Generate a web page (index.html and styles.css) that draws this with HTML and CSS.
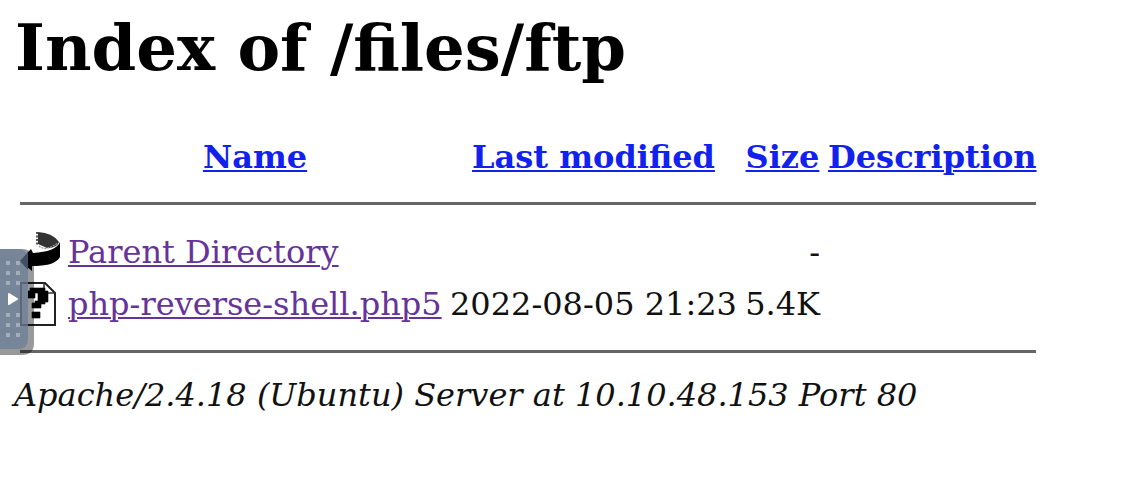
FILE: index.html
```html
<!DOCTYPE html>
<html lang="en">
<head>
<meta charset="utf-8">
<title>Index of /files/ftp</title>
<link rel="stylesheet" href="styles.css">
</head>
<body>
<h1 class="title">Index of /files/ftp</h1>
<table class="listing">
  <colgroup><col class="c-icon"><col class="c-name"><col class="c-date"><col class="c-size"><col class="c-desc"></colgroup>
  <tr class="head"><th></th><th><a href="#">Name</a></th><th><a href="#">Last modified</a></th><th><a href="#">Size</a></th><th><a href="#">Description</a></th></tr>
  <tr class="rule"><th colspan="5"><hr></th></tr>
  <tr class="item">
    <td><svg class="icon" viewBox="0 0 40 44" width="40" height="44">
      <path d="M18 2Q33 3 39 12Q37 18 27 18L18 14Z" fill="#333"/>
      <path d="M17 2V16" stroke="#555" stroke-width="2" stroke-dasharray="2 1.5"/>
      <path d="M19 16Q25 22 38 13" fill="none" stroke="#999" stroke-width="1.3" stroke-dasharray="2 1"/>
      <path d="M40 12V27C36 34 26 36 12 36V41L0 31L11 19L13 23C28 22 37 19 40 12Z"/>
    </svg></td>
    <td><a class="visited" href="#">Parent Directory</a></td><td></td><td class="num">-</td><td></td>
  </tr>
  <tr class="item">
    <td><svg class="icon" viewBox="0 0 40 44" width="40" height="44">
      <path d="M1 1H25L35 11V43H1Z" fill="#fff" stroke="#222" stroke-width="2"/>
      <path d="M24 1V11H35" fill="none" stroke="#333" stroke-width="1.5"/>
      <path d="M10 6H25V9H28V20H25V22H21V26H12V21H15V19H18V11H15V16H7V9H10ZM12 30H20V36H12Z" stroke="#000" stroke-width=".6"/>
    </svg></td>
    <td><a class="visited" href="#">php-reverse-shell.php5</a></td><td>2022-08-05 21:23</td><td class="num">5.4K</td><td></td>
  </tr>
  <tr class="rule last"><th colspan="5"><hr></th></tr>
</table>
<address class="server">Apache/2.4.18 (Ubuntu) Server at 10.10.48.153 Port 80</address>
<div class="handle">
  <svg class="grip" viewBox="0 0 34 106" width="34" height="106">
    <path d="M0 0H22Q34 0 34 12V94Q34 106 22 106H0Z" fill="#000" fill-opacity=".4"/>
    <path d="M0 0H18Q28 0 28 10V90Q28 100 18 100H0Z" fill="#778599"/>
    <path d="M28 3L20 12L28 21Z" fill="#435063"/>
    <path d="M21 34V76H28" fill="none" stroke="#5a677a" stroke-width="2"/>
    <path d="M20 34H28" stroke="#5a677a" stroke-width="2"/>
    <g stroke="#a4adba" stroke-width="4" stroke-dasharray="4 6">
      <path d="M8 12V36M18 12V36M8 64V88M18 64V88"/>
    </g>
    <path d="M9 45L17 50L9 55Z" fill="#fff" stroke="#fff" stroke-width="2" stroke-linejoin="round"/>
  </svg>
</div>
</body>
</html>
```
FILE: styles.css
```css
body {
  margin: 0;
  padding: 10px 0 0 16px;
  background: #fff;
  color: #111;
  font-family: "DejaVu Serif", serif;
  font-size: 32px;
  overflow: hidden;
}
.title {
  margin: 0 0 0 -1px;
  height: 120px;
  font-size: 64px;
  line-height: 76px;
  color: #000;
  white-space: nowrap;
}
.listing {
  table-layout: fixed;
  width: 1024px;
  border-collapse: collapse;
  line-height: 48px;
  white-space: nowrap;
}
.c-icon { width: 48px; }
.c-name { width: 382px; }
.c-date { width: 295px; }
.c-size { width: 83px; }
.c-desc { width: 216px; }
.listing th, .listing td { padding: 0 4px; vertical-align: middle; }
.listing td { text-align: left; }
.listing .num { text-align: right; }
.head { height: 54px; }
.item { height: 52px; }
.rule { height: 42px; line-height: 0; }
.listing .rule th { padding-bottom: 3px; }
.rule.last { height: 45px; }
.rule hr { margin: 0; border: 0; height: 3px; background: #666; }
a { color: #1122ee; text-decoration-thickness: 2px; text-underline-offset: 2px; }
.visited { color: #663399; }
.icon { display: block; }
.server { margin-left: -2px; line-height: 40px; white-space: nowrap; }
.handle { position: absolute; left: 0; top: 249px; }
.grip { display: block; }
```
